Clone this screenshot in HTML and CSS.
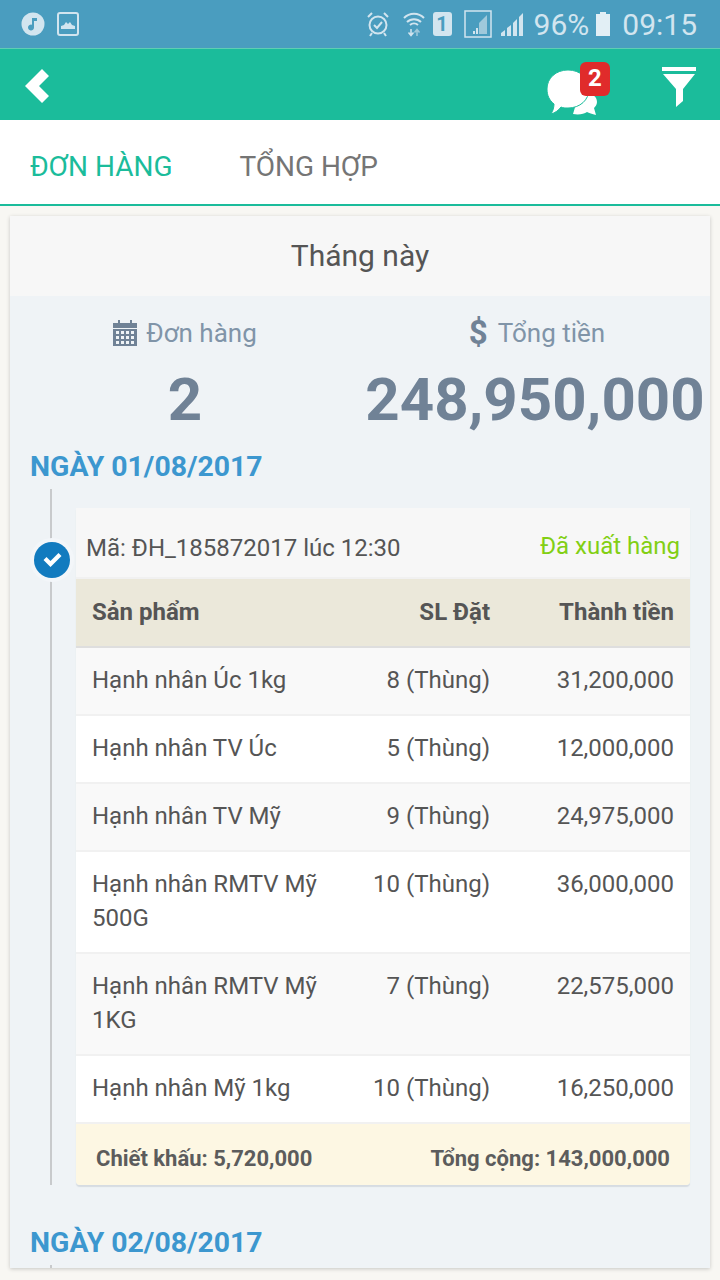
FILE: index.html
```html
<!DOCTYPE html>
<html>
<head>
    <meta charset="utf-8">
    <title>Đơn hàng</title>
    <link rel="stylesheet" href="styles.css">
</head>
<body>
    <div class="status-bar">
        <div class="status-left">
            <svg width="24" height="24" viewBox="0 0 24 24"><circle cx="12" cy="12" r="11.5" fill="#d2e5ef"/><path d="M11 6h5v3h-3v6.500a3 3 0 1 1-2-2.800z" fill="#4a9dbf"/></svg>
            <svg width="22" height="24" viewBox="0 0 22 24"><rect x="1" y="1" width="20" height="22" rx="2" fill="none" stroke="#d2e5ef" stroke-width="2"/><path d="M4 17v-3l3-1 2-3 2 2 2-2 2 3 3 1v3z" fill="#d2e5ef"/></svg>
        </div>
        <div class="status-right">
            <svg class="ic-alarm" width="24" height="26" viewBox="0 0 24 26" fill="none" stroke="#d2e5ef" stroke-width="2"><circle cx="12" cy="14" r="8.500"/><path d="M8 14l3 3 5-6M2 6l4-4M22 6l-4-4M6 22l-2 3M18 22l2 3"/></svg>
            <svg class="ic-wifi" width="22" height="26" viewBox="0 0 22 26" fill="none" stroke="#d2e5ef" stroke-width="2"><path d="M1 7a14 14 0 0 1 20 0M4 11a10 10 0 0 1 14 0M7 14a6 6 0 0 1 8 0"/><path d="M8 18v6M5.500 21.500l2.500 3 2.500-3" stroke-width="1.500"/><path d="M14 25v-6M11.500 21.500l2.500-3 2.500 3" stroke="#9fc9db" stroke-width="1.500"/></svg>
            <div class="sim">1</div>
            <svg class="ic-box" width="28" height="28" viewBox="0 0 28 28"><rect x="1" y="1" width="26" height="26" fill="none" stroke="#d2e5ef" stroke-width="1.500"/><path d="M23 5v19H15V13z" fill="#9fc9db"/><path d="M9 24v-3h2v3zM12 24v-6h2v6z" fill="#d2e5ef"/></svg>
            <svg class="ic-signal" width="24" height="26" viewBox="0 0 24 26" fill="#d2e5ef"><path d="M1 25v-3l4-3v6zM7 25v-8l4-3v11zM13 25V12l4-4v17zM19 25V6l4-4v23z"/></svg>
            <span class="status-text pct">96%</span>
            <svg class="ic-batt" width="16" height="26" viewBox="0 0 16 26"><path d="M5 1h6v2h4v22H1V3h4z" fill="#e2eff5"/></svg>
            <span class="status-text clock">09:15</span>
        </div>
    </div>

    <div class="app-bar">
        <svg class="back" width="26" height="34" viewBox="0 0 26 34"><path d="M17 0l7 7-10 10 10 10-7 7L0 17z" fill="#fff"/></svg>
        <div class="app-actions">
            <div class="chat">
                <svg width="50" height="46" viewBox="0 0 50 46" fill="#fff"><path d="M32 24h8c5 0 10 2 10 8 0 3-2 5-3 6l2 7c-4-1-7-2-9-3-3 2-8 3-14 2z"/><path d="M21 0c12 0 21 8 21 19s-9 19-21 19c-3 0-5 0-7-1-2 3-6 6-10 7 2-3 3-7 3-10C2 30 0 25 0 19 0 8 9 0 21 0z" stroke="#1bbc9b" stroke-width="1"/></svg>
                <span class="badge">2</span>
            </div>
            <svg class="filter" width="34" height="40" viewBox="0 0 34 40" fill="#fff"><rect width="34" height="4"/><path d="M1 7h32L21 22v12l-7 6V22z"/></svg>
        </div>
    </div>

    <div class="tabs">
        <a class="tab active">ĐƠN HÀNG</a>
        <a class="tab">TỔNG HỢP</a>
    </div>

    <div class="panel">
        <div class="panel-title">Tháng này</div>
        <div class="panel-body">
            <div class="stats">
                <div class="stat stat-orders">
                    <div class="stat-label">
                        <svg width="24" height="26" viewBox="0 0 24 26" fill="#708296"><path d="M5 0h2v3h10V0h2v3h5v5H0V3h5zM0 9h24v17H0zM3 11v3h3v-3zm5 0v3h3v-3zm5 0v3h3v-3zm5 0v3h3v-3zM3 16v3h3v-3zm5 0v3h3v-3zm5 0v3h3v-3zm5 0v3h3v-3zM3 21v3h3v-3zm5 0v3h3v-3zm5 0v3h3v-3zm5 0v3h3v-3z" fill-rule="evenodd"/></svg>
                        Đơn hàng
                    </div>
                    <div class="stat-value">2</div>
                </div>
                <div class="stat stat-money">
                    <div class="stat-label stat-label-money"><span class="dollar">$</span> Tổng tiền</div>
                    <div class="stat-value">248,950,000</div>
                </div>
            </div>

            <div class="day-title">NGÀY 01/08/2017</div>
            <div class="timeline">
                <div class="marker">
                    <svg width="36" height="36" viewBox="0 0 36 36"><circle cx="18" cy="18" r="18" fill="#127bbf"/><path d="M9.500 18l3-3 4 4 8-8 3 3-11 11z" fill="#fff"/></svg>
                </div>
                <div class="order">
                    <div class="order-head">
                        <span>Mã: ĐH_185872017 lúc 12:30</span>
                        <span class="order-status">Đã xuất hàng</span>
                    </div>
                    <div class="row row-head">
                        <div class="col-name">Sản phẩm</div>
                        <div class="col-qty">SL Đặt</div>
                        <div class="col-total">Thành tiền</div>
                    </div>
                    <div class="row odd">
                        <div class="col-name">Hạnh nhân Úc 1kg</div>
                        <div class="col-qty">8 (Thùng)</div>
                        <div class="col-total">31,200,000</div>
                    </div>
                    <div class="row">
                        <div class="col-name">Hạnh nhân TV Úc</div>
                        <div class="col-qty">5 (Thùng)</div>
                        <div class="col-total">12,000,000</div>
                    </div>
                    <div class="row odd">
                        <div class="col-name">Hạnh nhân TV Mỹ</div>
                        <div class="col-qty">9 (Thùng)</div>
                        <div class="col-total">24,975,000</div>
                    </div>
                    <div class="row">
                        <div class="col-name">Hạnh nhân RMTV Mỹ 500G</div>
                        <div class="col-qty">10 (Thùng)</div>
                        <div class="col-total">36,000,000</div>
                    </div>
                    <div class="row odd">
                        <div class="col-name">Hạnh nhân RMTV Mỹ 1KG</div>
                        <div class="col-qty">7 (Thùng)</div>
                        <div class="col-total">22,575,000</div>
                    </div>
                    <div class="row">
                        <div class="col-name">Hạnh nhân Mỹ 1kg</div>
                        <div class="col-qty">10 (Thùng)</div>
                        <div class="col-total">16,250,000</div>
                    </div>
                    <div class="order-foot">
                        <span>Chiết khấu: 5,720,000</span>
                        <span>Tổng cộng: 143,000,000</span>
                    </div>
                </div>
            </div>

            <div class="day-title day-second">NGÀY 02/08/2017</div>
            <div class="timeline-stub"></div>
        </div>
    </div>
</body>
</html>
```

FILE: styles.css
```css
html, body {
    margin: 0;
    padding: 0;
    height: 1280px;
    overflow: hidden;
    font-family: Roboto, sans-serif;
    background-color: #f8f7f3;
    color: #555;
}

.status-bar {
    height: 48px;
    background-color: #4a9dbf;
    display: flex;
    justify-content: space-between;
    align-items: center;
    padding: 0 23px 0 21px;
}

.status-left {
    display: flex;
    align-items: center;
    gap: 12px;
}

.status-right {
    display: flex;
    align-items: center;
}

.ic-wifi { margin-left: 13px; }
.sim { margin-left: 8px; }
.ic-box { margin-left: 12px; }
.ic-signal { margin-left: 8px; }
.pct { margin-left: 10px; }
.ic-batt { margin-left: 6px; }
.clock { margin-left: 11px; }

.status-text {
    font-size: 30px;
    color: #d2e5ef;
}

.sim {
    width: 19px;
    height: 24px;
    background-color: #d2e5ef;
    border-radius: 3px;
    color: #4a9dbf;
    font-size: 20px;
    font-weight: 700;
    line-height: 25px;
    text-align: center;
}

.app-bar {
    height: 71px;
    border-top: 1px solid #5fcdb4;
    background-color: #1bbc9b;
    display: flex;
    justify-content: space-between;
    align-items: center;
    padding: 0 24px 0 25px;
}

.back {
    margin-top: 3px;
}

.app-actions {
    display: flex;
    align-items: center;
    gap: 37px;
}

.filter {
    margin-top: 4px;
}

.chat {
    position: relative;
    width: 78px;
    height: 71px;
    display: flex;
    align-items: flex-end;
    padding-bottom: 4px;
    box-sizing: border-box;
}

.badge {
    position: absolute;
    top: 13px;
    right: 15px;
    width: 30px;
    height: 34px;
    background-color: #e02b2b;
    border-radius: 6px;
    color: #fff;
    font-size: 24px;
    font-weight: 700;
    line-height: 32px;
    text-align: center;
}

.tabs {
    height: 86px;
    background-color: #fff;
    border-bottom: 2px solid #1bbc9b;
    display: flex;
    gap: 67px;
    padding-left: 30px;
    box-sizing: border-box;
}

.tab {
    font-size: 28px;
    line-height: 93px;
    color: #757575;
}

.tab.active {
    color: #1bbc9b;
}

.panel {
    margin: 10px 10px 0;
    height: 1052px;
    overflow: hidden;
    box-shadow: 0 1px 4px rgba(0,0,0,0.2);
}

.panel-title {
    height: 80px;
    background-color: #f7f7f7;
    font-size: 30px;
    line-height: 80px;
    text-align: center;
}

.panel-body {
    height: 972px;
    background-color: #eff3f6;
    padding: 0 0 0 20px;
    box-sizing: border-box;
}

.stats {
    display: flex;
    height: 153px;
}

.stat {
    text-align: center;
    color: #708296;
}

.stat-orders {
    width: 310px;
}

.stat-money {
    width: 340px;
    margin-left: 25px;
}

.stat-label {
    height: 34px;
    margin-top: 20px;
    font-size: 26px;
    line-height: 34px;
    color: #8094a8;
    display: flex;
    align-items: center;
    justify-content: center;
    gap: 9px;
}

.stat-label-money {
    gap: 10px;
    padding-left: 4px;
}

.dollar {
    font-size: 33px;
    font-weight: 700;
    color: #708296;
}

.stat-value {
    margin-top: 15px;
    font-size: 60px;
    font-weight: 700;
    line-height: 70px;
}

.day-title {
    font-size: 28.4px;
    font-weight: 700;
    line-height: 36px;
    color: #3c97cf;
}

.day-second {
    margin-top: 40px;
}

.timeline {
    position: relative;
    margin: 4px 0 0 20px;
    border-left: 2px solid #c8cacc;
    padding: 19px 0 0 24px;
    height: 677px;
}

.marker {
    position: absolute;
    left: -22px;
    top: 49px;
    border-radius: 50%;
    border: 4px solid #f3f6f9;
    height: 36px;
    width: 36px;
}

.order {
    width: 614px;
    box-shadow: 0 2px 1px #d6dce2;
    border-radius: 0 0 4px 4px;
}

.order-head {
    height: 71px;
    background-color: #f7f7f7;
    border-bottom: 2px solid #f1f1f1;
    display: flex;
    justify-content: space-between;
    align-items: center;
    padding: 10px 10px 0;
    box-sizing: border-box;
    font-size: 24px;
}

.order-status {
    color: #82cf14;
    margin-bottom: 4px;
}

.row {
    display: flex;
    background-color: #fff;
    border-bottom: 2px solid #f1f1f1;
    padding: 15px 16px 17px;
    font-size: 24px;
    line-height: 34px;
}

.row.odd {
    background-color: #f9f9f9;
}

.row-head {
    background-color: #ebe8da;
    border-bottom: 2px solid #dedede;
    font-weight: 700;
    padding: 16px 16px 17px;
}

.col-name {
    width: 258px;
}

.col-qty {
    width: 140px;
    text-align: right;
}

.col-total {
    flex: 1;
    text-align: right;
}

.order-foot {
    height: 61px;
    background-color: #fdf7e3;
    display: flex;
    justify-content: space-between;
    align-items: center;
    padding: 8px 20px 0;
    box-sizing: border-box;
    font-size: 22px;
    font-weight: 700;
    color: #5c5c5c;
    border-radius: 0 0 4px 4px;
}

.timeline-stub {
    margin: 4px 0 0 20px;
    height: 20px;
    border-left: 2px solid #c8cacc;
}
```
